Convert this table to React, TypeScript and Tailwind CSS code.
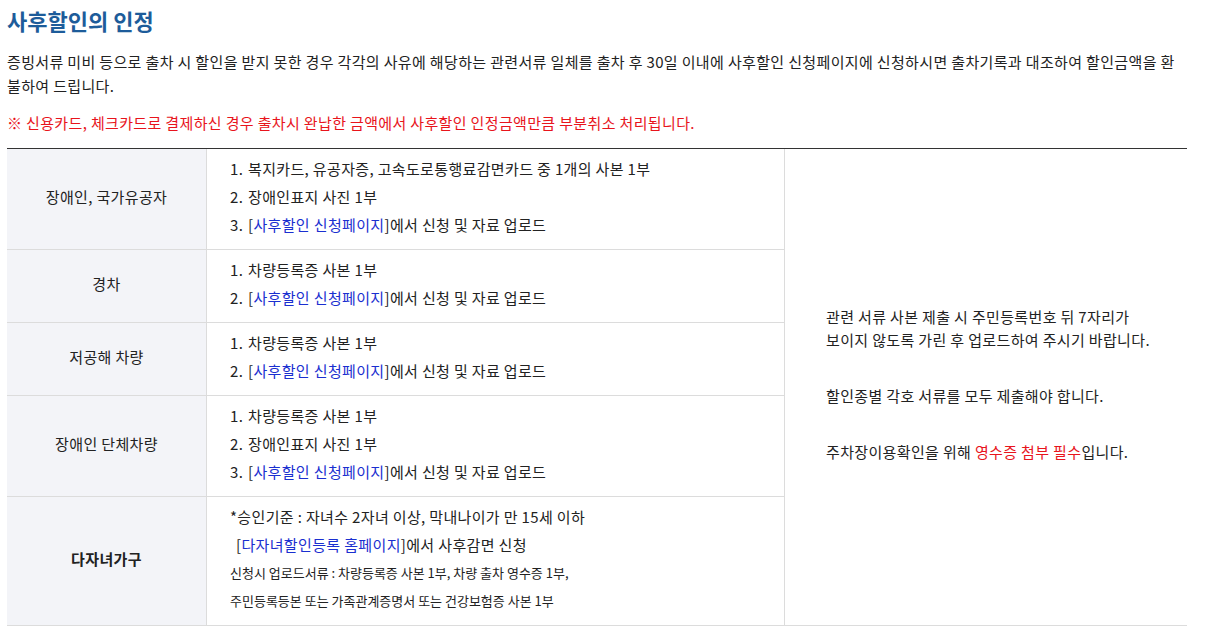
const font = { fontFamily: '"Noto Sans CJK KR", "Noto Sans", sans-serif' };

function Link({ children }: { children: React.ReactNode }) {
  return (
    <>
      [<span className="text-[#1a2fd0]">{children}</span>]
    </>
  );
}

function Item({ n, children }: { n: number; children: React.ReactNode }) {
  return (
    <div className="flex">
      <span className="w-[18px] shrink-0">{n}.</span>
      <span>{children}</span>
    </div>
  );
}

function Row({
  label,
  bold,
  children,
  first,
}: {
  label: string;
  bold?: boolean;
  children: React.ReactNode;
  first?: boolean;
}) {
  return (
    <div className={`flex ${first ? "" : "border-t border-[#dcdcdc]"}`}>
      <div
        className={`flex w-[200px] shrink-0 items-center justify-center border-r border-[#dcdcdc] bg-[#f3f4f8] pb-[3px] text-[15px] text-[#222] ${
          bold ? "font-bold" : ""
        }`}
      >
        {label}
      </div>
      <div className="flex-1 pt-[6px] pb-[10px] pl-[23px] text-[15px] leading-[28px] text-[#222]">{children}</div>
    </div>
  );
}

export default function App() {
  return (
    <div className="w-[1228px] bg-white px-[7px] tracking-[0.35px]" style={font}>
      <h2 className="mt-[5px] text-[22px] font-bold leading-[30px] tracking-normal text-[#1d5c9a]">사후할인의 인정</h2>
      <p className="mt-[15px] w-[1172px] break-all text-[15px] leading-[24px] text-[#222]">
        증빙서류 미비 등으로 출차 시 할인을 받지 못한 경우 각각의 사유에 해당하는 관련서류 일체를 출차 후 30일 이내에 사후할인 신청페이지에 신청하시면 출차기록과 대조하여 할인금액을 환불하여 드립니다.
      </p>
      <p className="mt-[13px] text-[15px] leading-[24px] text-[#e8141c]">
        ※ 신용카드, 체크카드로 결제하신 경우 출차시 완납한 금액에서 사후할인 인정금액만큼 부분취소 처리됩니다.
      </p>

      <div className="mt-[13px] flex w-[1180px] border-t border-b border-t-[#333] border-b-[#dcdcdc]">
        <div className="w-[778px] shrink-0 border-r border-[#dcdcdc]">
          <Row label="장애인, 국가유공자" first>
            <Item n={1}>복지카드, 유공자증, 고속도로통행료감면카드 중 1개의 사본 1부</Item>
            <Item n={2}>장애인표지 사진 1부</Item>
            <Item n={3}>
              <Link>사후할인 신청페이지</Link>에서 신청 및 자료 업로드
            </Item>
          </Row>
          <Row label="경차">
            <Item n={1}>차량등록증 사본 1부</Item>
            <Item n={2}>
              <Link>사후할인 신청페이지</Link>에서 신청 및 자료 업로드
            </Item>
          </Row>
          <Row label="저공해 차량">
            <Item n={1}>차량등록증 사본 1부</Item>
            <Item n={2}>
              <Link>사후할인 신청페이지</Link>에서 신청 및 자료 업로드
            </Item>
          </Row>
          <Row label="장애인 단체차량">
            <Item n={1}>차량등록증 사본 1부</Item>
            <Item n={2}>장애인표지 사진 1부</Item>
            <Item n={3}>
              <Link>사후할인 신청페이지</Link>에서 신청 및 자료 업로드
            </Item>
          </Row>
          <Row label="다자녀가구" bold>
            <div>*승인기준 : 자녀수 2자녀 이상, 막내나이가 만 15세 이하</div>
            <div className="pl-[6px]">
              <Link>다자녀할인등록 홈페이지</Link>에서 사후감면 신청
            </div>
            <div className="text-[13px] tracking-normal">신청시 업로드서류 : 차량등록증 사본 1부, 차량 출차 영수증 1부,</div>
            <div className="text-[13px] tracking-normal">주민등록등본 또는 가족관계증명서 또는 건강보험증 사본 1부</div>
          </Row>
        </div>
        <div className="flex flex-1 flex-col justify-center pb-[7px] pl-[41px] text-[15px] leading-[23px] text-[#222]">
          <p>
            관련 서류 사본 제출 시 주민등록번호 뒤 7자리가
            <br />
            보이지 않도록 가린 후 업로드하여 주시기 바랍니다.
          </p>
          <p className="mt-[33px]">할인종별 각호 서류를 모두 제출해야 합니다.</p>
          <p className="mt-[33px]">
            주차장이용확인을 위해 <span className="text-[#e8141c]">영수증 첨부 필수</span>입니다.
          </p>
        </div>
      </div>
      <div className="h-[18px]" />
    </div>
  );
}
